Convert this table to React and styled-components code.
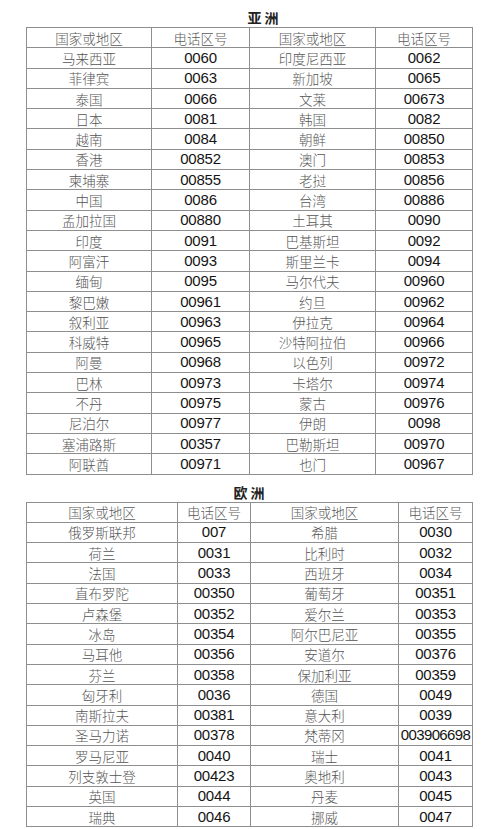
import React from 'react';
import styled, { createGlobalStyle } from 'styled-components';

const GlobalStyle = createGlobalStyle`
  html, body {
    margin: 0;
    padding: 0;
    background: #fff;
  }
`;

const Page = styled.div`
  width: 500px;
  padding: 8px 0 0 26px;
  box-sizing: border-box;
`;

const Section = styled.section`
  width: 446px;
  margin-top: ${props => props.gap || 0}px;
`;

const Title = styled.div`
  height: 19px;
  line-height: 19px;
  text-align: center;
  font-family: "Noto Sans CJK SC", sans-serif;
  font-weight: 700;
  font-size: 14px;
  color: #222;
  padding-left: ${props => props.shift || 0}px;
`;

const Table = styled.table`
  width: 446px;
  border-collapse: collapse;
  table-layout: fixed;
`;

const Row = styled.tr`
  height: 20.3px;
`;

const Cell = styled.td`
  border: 1px solid #8e8e8e;
  padding: 0;
  text-align: center;
  white-space: nowrap;
  overflow: hidden;
  line-height: 18px;
`;

const NameCell = styled(Cell)`
  font-family: "Noto Sans CJK SC", "Liberation Serif", serif;
  font-size: 13.5px;
  color: #555;
  font-weight: 300;
`;

const CodeCell = styled(Cell)`
  font-family: "Liberation Sans", Arial, sans-serif;
  font-size: 15px;
  color: #141414;
  letter-spacing: ${props => (props.tight ? '-0.6px' : '-0.2px')};
`;

const HeadCell = styled(NameCell)`
  color: #5a5a5a;
`;

const asia = [
  ['马来西亚', '0060', '印度尼西亚', '0062'],
  ['菲律宾', '0063', '新加坡', '0065'],
  ['泰国', '0066', '文莱', '00673'],
  ['日本', '0081', '韩国', '0082'],
  ['越南', '0084', '朝鲜', '00850'],
  ['香港', '00852', '澳门', '00853'],
  ['柬埔寨', '00855', '老挝', '00856'],
  ['中国', '0086', '台湾', '00886'],
  ['孟加拉国', '00880', '土耳其', '0090'],
  ['印度', '0091', '巴基斯坦', '0092'],
  ['阿富汗', '0093', '斯里兰卡', '0094'],
  ['缅甸', '0095', '马尔代夫', '00960'],
  ['黎巴嫩', '00961', '约旦', '00962'],
  ['叙利亚', '00963', '伊拉克', '00964'],
  ['科威特', '00965', '沙特阿拉伯', '00966'],
  ['阿曼', '00968', '以色列', '00972'],
  ['巴林', '00973', '卡塔尔', '00974'],
  ['不丹', '00975', '蒙古', '00976'],
  ['尼泊尔', '00977', '伊朗', '0098'],
  ['塞浦路斯', '00357', '巴勒斯坦', '00970'],
  ['阿联酋', '00971', '也门', '00967'],
];

const europe = [
  ['俄罗斯联邦', '007', '希腊', '0030'],
  ['荷兰', '0031', '比利时', '0032'],
  ['法国', '0033', '西班牙', '0034'],
  ['直布罗陀', '00350', '葡萄牙', '00351'],
  ['卢森堡', '00352', '爱尔兰', '00353'],
  ['冰岛', '00354', '阿尔巴尼亚', '00355'],
  ['马耳他', '00356', '安道尔', '00376'],
  ['芬兰', '00358', '保加利亚', '00359'],
  ['匈牙利', '0036', '德国', '0049'],
  ['南斯拉夫', '00381', '意大利', '0039'],
  ['圣马力诺', '00378', '梵蒂冈', '003906698'],
  ['罗马尼亚', '0040', '瑞士', '0041'],
  ['列支敦士登', '00423', '奥地利', '0043'],
  ['英国', '0044', '丹麦', '0045'],
  ['瑞典', '0046', '挪威', '0047'],
];

function CodeTable({ title, cols, rows, shift, gap }) {
  return (
    <Section gap={gap}>
      <Title shift={shift}>{title}</Title>
      <Table>
        <colgroup>
          {cols.map((w, i) => <col key={i} style={{ width: w }} />)}
        </colgroup>
        <tbody>
          <Row>
            <HeadCell>国家或地区</HeadCell>
            <HeadCell>电话区号</HeadCell>
            <HeadCell>国家或地区</HeadCell>
            <HeadCell>电话区号</HeadCell>
          </Row>
          {rows.map(([n1, c1, n2, c2]) => (
            <Row key={n1}>
              <NameCell>{n1}</NameCell>
              <CodeCell>{c1}</CodeCell>
              <NameCell>{n2}</NameCell>
              <CodeCell tight={c2.length > 6}>{c2}</CodeCell>
            </Row>
          ))}
        </tbody>
      </Table>
    </Section>
  );
}

export default function App() {
  return (
    <>
      <GlobalStyle />
      <Page>
        <CodeTable title="亚 洲" cols={[125, 98, 126, 97]} rows={asia} shift={28} />
        <CodeTable title="欧 洲" cols={[151, 73, 148, 74]} rows={europe} shift={0} gap={8} />
      </Page>
    </>
  );
}
